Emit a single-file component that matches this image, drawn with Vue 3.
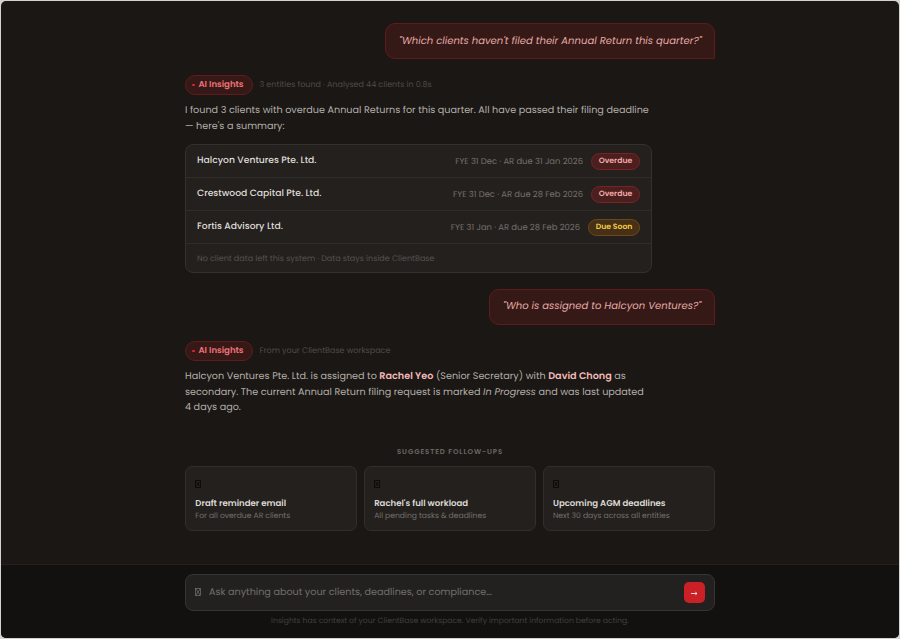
<script setup>
const filings = [
    { name: 'Halcyon Ventures Pte. Ltd.', due: 'FYE 31 Dec · AR due 31 Jan 2026', status: 'Overdue', type: 'overdue' },
    { name: 'Crestwood Capital Pte. Ltd.', due: 'FYE 31 Dec · AR due 28 Feb 2026', status: 'Overdue', type: 'overdue' },
    { name: 'Fortis Advisory Ltd.', due: 'FYE 31 Jan · AR due 28 Feb 2026', status: 'Due Soon', type: 'soon' },
]

const followUps = [
    { title: 'Draft reminder email', text: 'For all overdue AR clients' },
    { title: "Rachel's full workload", text: 'All pending tasks & deadlines' },
    { title: 'Upcoming AGM deadlines', text: 'Next 30 days across all entities' },
]
</script>

<template>
    <div class="page">
        <div class="window">
            <main class="chat">
                <div class="bubble first"><span>"Which clients haven't filed their Annual Return this quarter?"</span></div>

                <div class="insightHeader">
                    <span class="pill"><i class="dot"></i><b>AI Insights</b></span>
                    <span class="meta">3 entities found · Analysed 44 clients in 0.8s</span>
                </div>
                <p class="answer">
                    <span>I found 3 clients with overdue Annual Returns for this quarter. All have passed their filing deadline</span><br>
                    <span>— here's a summary:</span>
                </p>

                <div class="filings">
                    <div v-for="filing in filings" :key="filing.name" class="row">
                        <span class="name">{{ filing.name }}</span>
                        <span class="due">{{ filing.due }}</span>
                        <span class="badge" :class="filing.type">{{ filing.status }}</span>
                    </div>
                    <div class="privacy">No client data left this system · Data stays inside ClientBase</div>
                </div>

                <div class="bubble second"><span>"Who is assigned to Halcyon Ventures?"</span></div>

                <div class="insightHeader">
                    <span class="pill"><i class="dot"></i><b>AI Insights</b></span>
                    <span class="meta">From your ClientBase workspace</span>
                </div>
                <p class="answer">
                    <span>Halcyon Ventures Pte. Ltd. is assigned to <strong>Rachel Yeo</strong> (Senior Secretary) with <strong>David Chong</strong> as</span><br>
                    <span>secondary. The current Annual Return filing request is marked <em>In Progress</em> and was last updated</span><br>
                    <span>4 days ago.</span>
                </p>

                <h2>SUGGESTED FOLLOW-UPS</h2>
                <div class="followUps">
                    <button v-for="item in followUps" :key="item.title" class="card">
                        <svg class="glyph" viewBox="0 0 6 8">
                            <rect x=".5" y=".5" width="5" height="7" />
                            <path d="M1.5 2 4.5 6M4.5 2 1.5 6" />
                        </svg>
                        <span class="cardTitle">{{ item.title }}</span>
                        <span class="cardText">{{ item.text }}</span>
                    </button>
                </div>
            </main>

            <footer>
                <div class="ask">
                    <svg class="glyph" viewBox="0 0 6 8">
                        <rect x=".5" y=".5" width="5" height="7" />
                        <path d="M1 1 5 7M5 1 1 7" />
                    </svg>
                    <span class="placeholder">Ask anything about your clients, deadlines, or compliance…</span>
                    <button class="send">
                        <svg viewBox="0 0 7 5">
                            <path d="M0 2.5H6M4.4 1.2 6 2.5 4.4 3.8" />
                        </svg>
                    </button>
                </div>
                <p class="note">Insights has context of your ClientBase workspace. Verify important information before acting.</p>
            </footer>
        </div>
    </div>
</template>

<style>
body {
    background-color: #d3d4d0;
}
</style>

<style scoped>
* {
    box-sizing: border-box;
}

.page {
    height: 639px;
    padding: 1px;
    font-family: Poppins, Inter, "Open Sans", sans-serif;
    text-rendering: geometricPrecision;
    white-space: nowrap;
}

.window {
    height: 637px;
    display: flex;
    flex-direction: column;
    overflow: hidden;
    border-radius: 5px;
    background-color: #1b1714;
}

.chat {
    width: 530px;
    height: 563px;
    margin: 0 auto;
    padding-top: 22.4px;
    display: flex;
    flex-direction: column;
}

.bubble {
    height: 36px;
    padding: 9px 13px 0;
    align-self: flex-end;
    border: 1px solid #611b1c;
    border-radius: 10px 10px 1px 10px;
    background-color: #351916;
    color: #e5aaa8;
    font-size: 10.05px;
    line-height: 14px;
    font-style: italic;
}

.first {
    width: 330px;
    padding-top: 10px;
}

.second {
    width: 226px;
    margin-top: 16.1px;
}

.insightHeader {
    height: 20px;
    margin-top: 16px;
    display: flex;
    align-items: center;
    gap: 6.5px;
}

.pill {
    width: 68px;
    height: 20px;
    padding: 0 0 1px 6px;
    display: flex;
    align-items: center;
    gap: 5px;
    border: 1px solid #5e1c1d;
    border-radius: 10px;
    background-color: #361817;
    color: #f17478;
    font-size: 8.55px;
}

.pill b {
    font-weight: 600;
}

.dot {
    width: 2.5px;
    height: 2.5px;
    margin-right: -1px;
    border-radius: 50%;
    background-color: #dc2630;
}

.meta {
    color: #504c49;
    font-size: 8.03px;
}

.answer {
    margin: 7.6px 0 0;
    color: #b4b0ac;
    font-size: 9.65px;
    line-height: 15.7px;
}

.answer strong {
    color: #f2b9b8;
    font-weight: 600;
}

.filings {
    width: 467px;
    height: 129px;
    margin-top: 9.9px;
    border: 1px solid #34302d;
    border-radius: 8px;
    background-color: #24201d;
}

.row {
    height: 33px;
    padding: 0 11px;
    display: flex;
    align-items: center;
    border-bottom: 1px solid #302c29;
}

.name {
    margin-right: auto;
    padding-bottom: 1px;
    color: #dedbd8;
    font-size: 9.23px;
    font-weight: 500;
}

.due {
    margin-right: 8px;
    padding-top: 1px;
    color: #74706d;
    font-size: 8.43px;
}

.badge {
    width: 49px;
    height: 17px;
    border: 1px solid #7a2224;
    border-radius: 9px;
    background-color: #4b1f1e;
    color: #f4aaaa;
    font-size: 7.7px;
    line-height: 14px;
    font-weight: 600;
    text-align: center;
}

.soon {
    width: 52px;
    border-color: #704614;
    background-color: #463018;
    color: #f5ce42;
}

.privacy {
    padding: 1px 11px 0;
    color: #565250;
    font-size: 8.03px;
    line-height: 28px;
}

h2 {
    margin: 31.8px 0 8px;
    color: #6b6764;
    font-size: 7px;
    line-height: 10px;
    font-weight: 600;
    letter-spacing: .9px;
    text-align: center;
}

.followUps {
    display: grid;
    grid-template-columns: repeat(3, 1fr);
    gap: 6.5px;
}

.card {
    height: 65px;
    padding: 13px 9.3px 0;
    display: flex;
    flex-direction: column;
    align-items: flex-start;
    border: 1px solid #322e2b;
    border-radius: 7px;
    background-color: #24201d;
    font-family: inherit;
    text-rendering: inherit;
}

.glyph {
    width: 6px;
    height: 8px;
    flex-shrink: 0;
    fill: none;
    stroke: #0b0a09;
    stroke-width: .9;
}

.cardTitle {
    margin-top: 9px;
    color: #dcd9d6;
    font-size: 8.55px;
    line-height: 12px;
    font-weight: 600;
}

.cardText {
    margin-top: 1.4px;
    color: #74706d;
    font-size: 7.65px;
    line-height: 12px;
}

footer {
    flex: 1;
    padding-top: 9px;
    display: flex;
    flex-direction: column;
    align-items: center;
    border-top: 1px solid #25201c;
    background-color: #121110;
}

.ask {
    width: 530px;
    height: 37px;
    padding: 0 9px;
    display: flex;
    align-items: center;
    border: 1px solid #373533;
    border-radius: 8px;
    background-color: #23211f;
}

.ask .glyph {
    margin-bottom: 2px;
    stroke: #797674;
    stroke-width: .7;
}

.placeholder {
    margin: 0 auto 0 8px;
    color: #726f6d;
    font-size: 9.65px;
}

.send {
    width: 21px;
    height: 21px;
    padding: 1px 0 0;
    display: grid;
    place-items: center;
    border: 0;
    border-radius: 5px;
    background-color: #cc2027;
}

.send svg {
    width: 7px;
    height: 5px;
    fill: none;
    stroke: #fff;
    stroke-width: .8;
}

.note {
    margin: 4px 0 0;
    color: #413f3d;
    font-size: 7.65px;
    line-height: 11px;
}
</style>
